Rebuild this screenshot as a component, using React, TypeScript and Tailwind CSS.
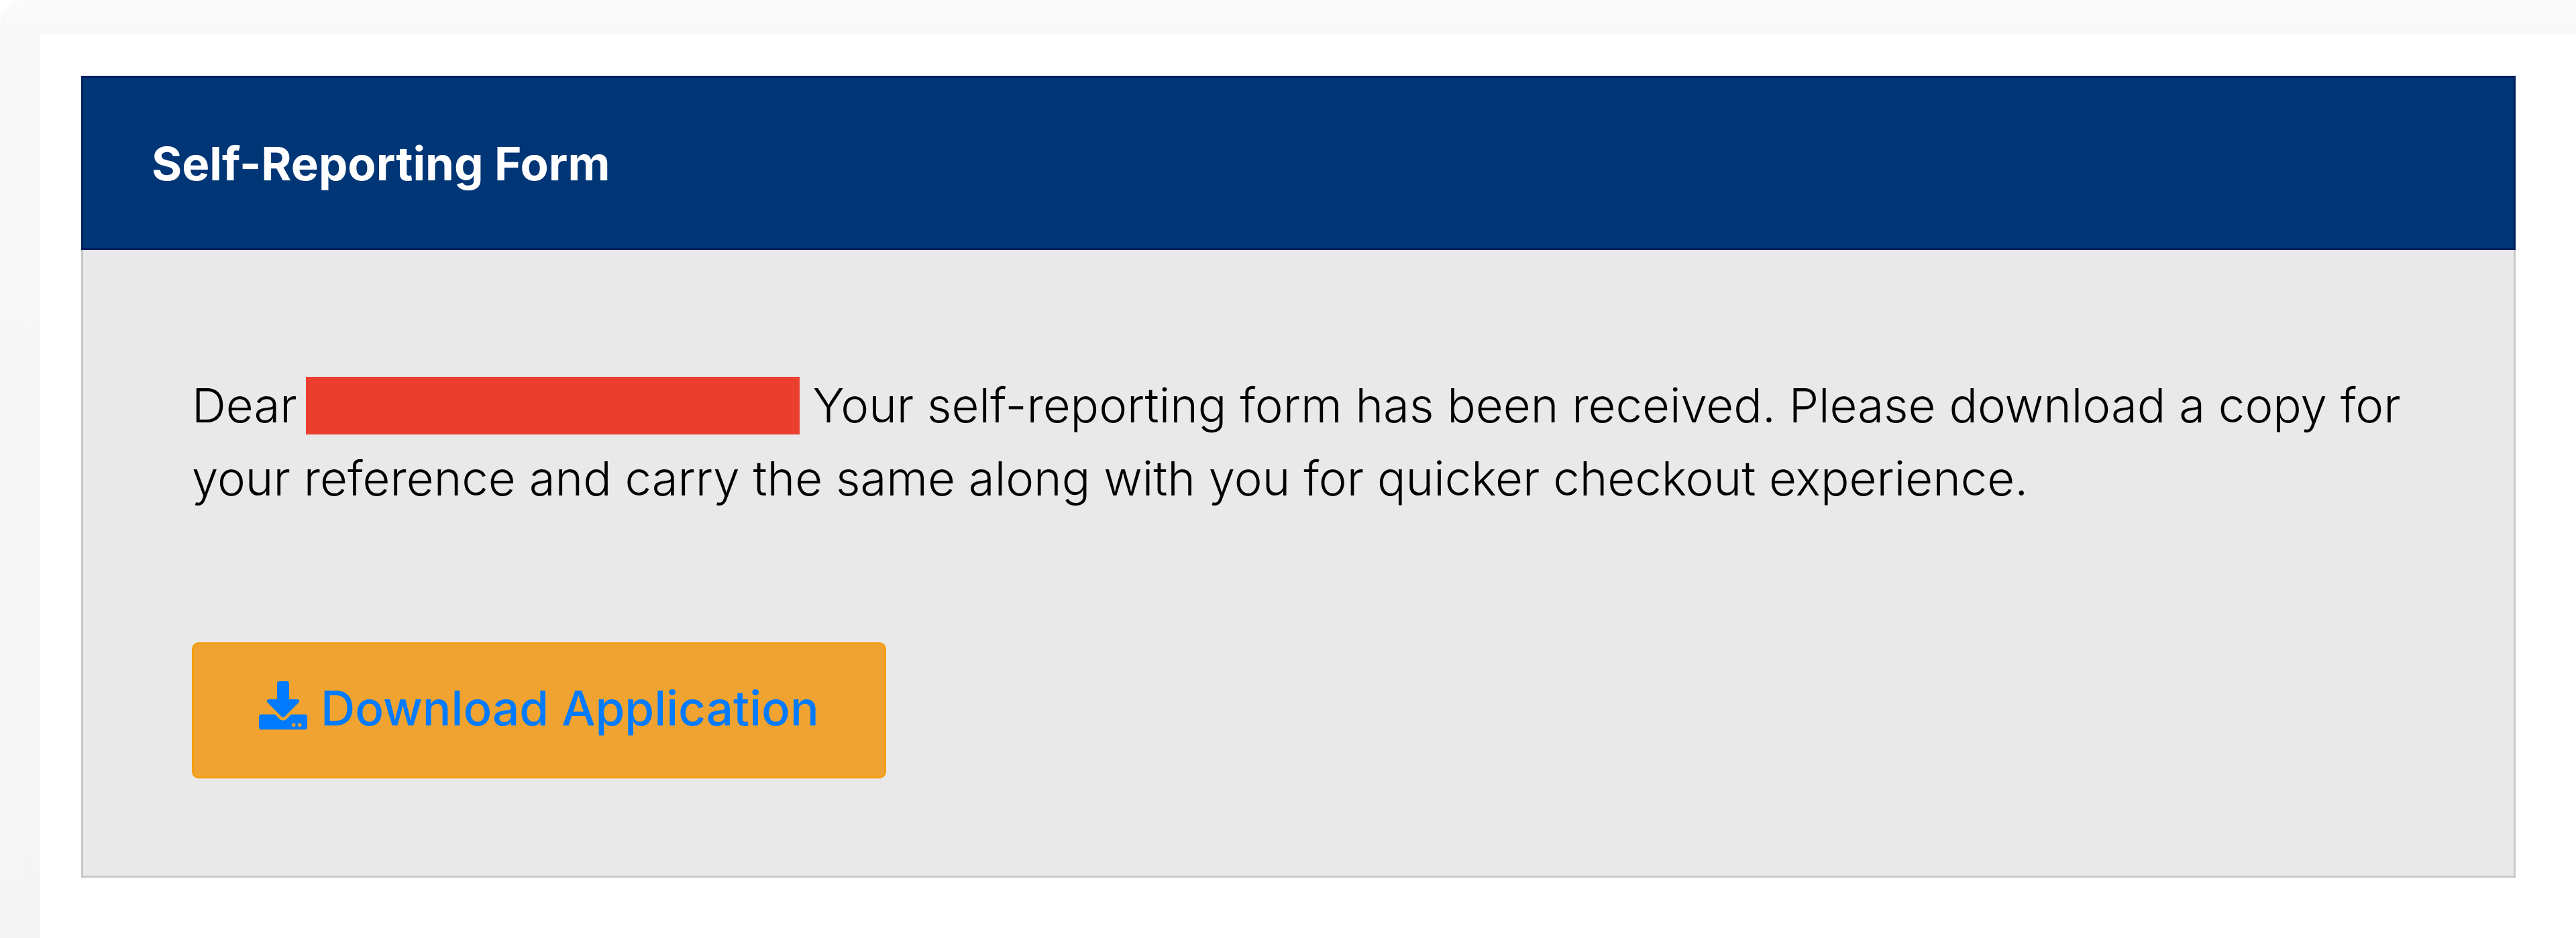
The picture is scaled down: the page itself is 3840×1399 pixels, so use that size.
import { FaDownload } from "react-icons/fa";

export default function App() {
  return (
    <div className="h-[1399px] overflow-hidden rounded-tl-[36px] bg-[linear-gradient(to_bottom,#fbfbfb,#f8f8f8_50px,#f5f5f5)] pl-[60px] pt-[51px] font-['Inter',sans-serif]">
      <div className="h-full bg-white pl-[61px] pr-[90px] pt-[62px]">
        <div className="w-full">
          <div className="flex h-[260px] items-center border-[3px] border-[#00205f] bg-[#003576] pl-[102px] pt-[3px]">
            <h1 className="text-[69px] font-bold leading-none text-white">Self-Reporting Form</h1>
          </div>
          <div className="h-[936px] border-x-[3px] border-b-[3px] border-[#c8c8c8] bg-[#e9e9e9] pl-[162px] pr-[120px] pt-[178px]">
            <p className="text-[70.7px] font-light leading-[108px] text-black">
              Dear<span className="mb-[12px] ml-[13px] inline-block h-[86px] w-[736px] bg-[#ea3e2f] align-middle" /> Your self-reporting form has been received. Please download a copy for your reference and carry the same along with you for quicker checkout experience.
            </p>
            <button className="mt-[190px] flex h-[203px] w-[1035px] items-center gap-[20px] rounded-[10px] border-[3px] border-[#f49f12] bg-[#f0a330] pb-[6px] pl-[97px] text-[71px] font-medium text-[#007bff]">
              <FaDownload className="mb-[8px] text-[72px]" />
              Download Application
            </button>
          </div>
        </div>
      </div>
    </div>
  );
}
